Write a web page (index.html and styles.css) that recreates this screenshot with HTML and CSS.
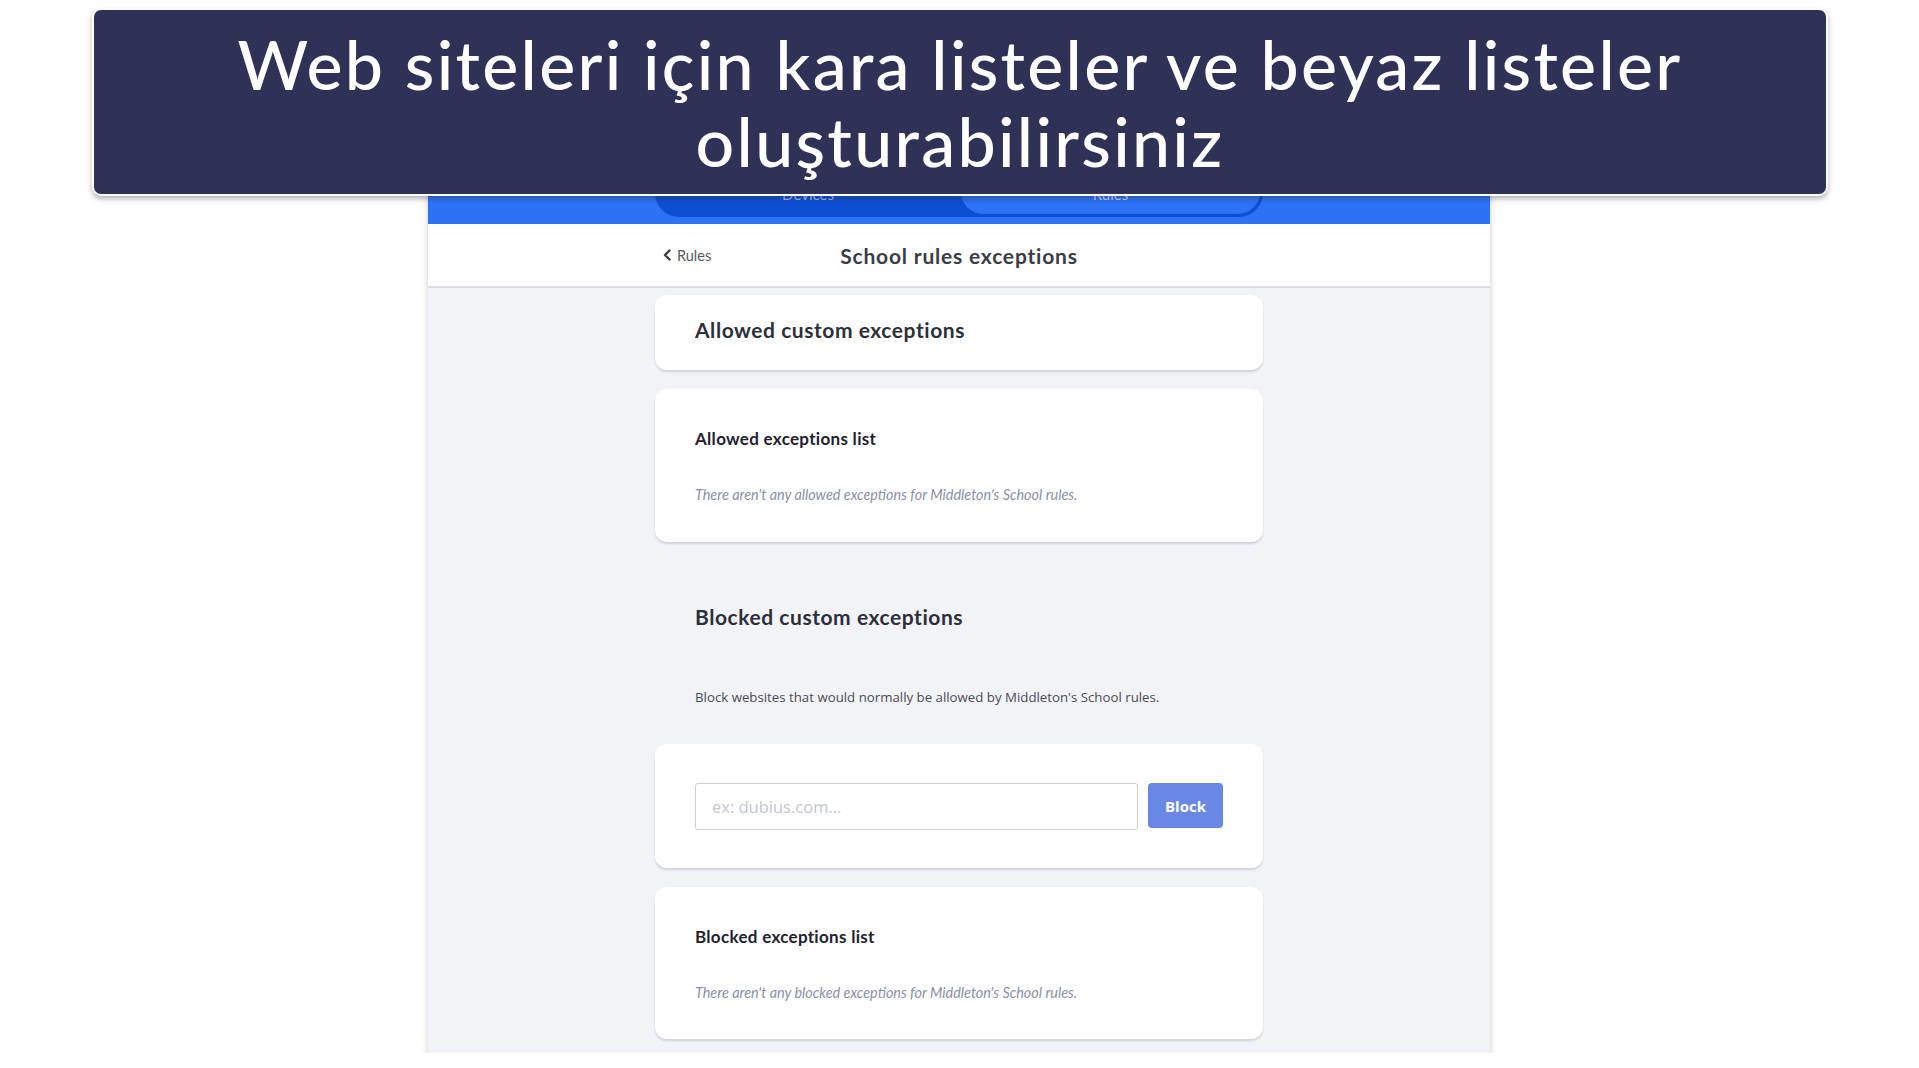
FILE: index.html
```html
<!DOCTYPE html>
<html lang="tr">
  <head>
    <meta charset="UTF-8" />
    <meta name="viewport" content="width=device-width, initial-scale=1.0" />
    <title>School rules exceptions</title>
    <link rel="stylesheet" href="styles.css">
  </head>
  <body>
    <div class="banner">
      <h1>Web siteleri için kara listeler ve beyaz listeler oluşturabilirsiniz</h1>
    </div>

    <div class="frame">
      <header class="topbar">
        <nav class="tabs">
          <a href="#" class="tab">Devices</a>
          <a href="#" class="tab active">Rules</a>
        </nav>
      </header>

      <div class="subbar">
        <div class="subbar-inner">
          <a href="#" class="back">
            <svg width="8" height="12" viewBox="0 0 8 12">
              <path d="M6.5 1.5 L2 6 L6.5 10.5" fill="none" stroke="#3a3c48" stroke-width="2.4" stroke-linecap="round" stroke-linejoin="round" />
            </svg>
            Rules
          </a>
          <h2>School rules exceptions</h2>
          <span></span>
        </div>
      </div>

      <main class="content">
        <section class="card card-head">
          <h3>Allowed custom exceptions</h3>
        </section>

        <section class="card card-list">
          <h4>Allowed exceptions list</h4>
          <p class="empty">There aren't any allowed exceptions for Middleton's School rules.</p>
        </section>

        <section class="plain">
          <h3>Blocked custom exceptions</h3>
          <p class="desc">Block websites that would normally be allowed by Middleton's School rules.</p>
        </section>

        <section class="card card-form">
          <form>
            <input type="text" placeholder="ex: dubius.com..." />
            <button type="submit">Block</button>
          </form>
        </section>

        <section class="card card-list">
          <h4>Blocked exceptions list</h4>
          <p class="empty">There aren't any blocked exceptions for Middleton's School rules.</p>
        </section>
      </main>
    </div>
  </body>
</html>
```

FILE: styles.css
```css
body {
  font-family: Lato, "Noto Sans", sans-serif;
  margin: 0;
  padding: 0;
  background-color: #fff;
  color: #2d2f3a;
}

.banner {
  position: absolute;
  left: 92px;
  top: 8px;
  width: 1732px;
  height: 184px;
  background-color: #2f3156;
  border: 2px solid #fff;
  border-radius: 9px;
  box-shadow: 0 3px 5px rgba(40, 40, 70, 0.35);
  display: flex;
  align-items: center;
  justify-content: center;
  z-index: 2;
}

.banner h1 {
  margin: 0;
  max-width: 1580px;
  color: #fff;
  font-size: 68px;
  font-weight: 500;
  letter-spacing: 2.3px;
  line-height: 77px;
  text-align: center;
}

.frame {
  width: 1062px;
  margin: 150px 0 0 428px;
  background-color: #f2f3f7;
  box-shadow: 0 3px 6px rgba(0, 0, 0, 0.22);
  padding-bottom: 14px;
}

.topbar {
  background-color: #2b72f5;
  height: 74px;
  padding-top: 15px;
  box-sizing: border-box;
}

.tabs {
  width: 608px;
  height: 52px;
  margin: 0 auto;
  display: grid;
  grid-template-columns: 306px 1fr;
  background-color: #0d4fd2;
  border-radius: 0 0 24px 24px;
  padding: 0 3px 3px 0;
  box-sizing: border-box;
}

.tab {
  display: flex;
  align-items: center;
  justify-content: center;
  padding-top: 8px;
  color: #a8bff0;
  font-size: 15px;
  text-decoration: none;
  border-radius: 0 0 22px 22px;
}

.tab.active {
  background-color: #2b72f5;
  color: #c9d8fb;
}

.subbar {
  background-color: #fff;
  height: 62px;
  border-bottom: 2px solid #dcdde3;
}

.subbar-inner {
  width: 608px;
  height: 100%;
  margin: 0 auto;
  display: grid;
  grid-template-columns: 1fr auto 1fr;
  align-items: center;
}

.back {
  display: flex;
  align-items: center;
  gap: 6px;
  padding-left: 8px;
  color: #555866;
  font-size: 14.5px;
  text-decoration: none;
}

.subbar h2 {
  margin: 0;
  font-size: 21px;
  font-weight: 700;
  color: #3a3c46;
  letter-spacing: 0.8px;
}

.content {
  width: 608px;
  margin: 7px auto 0;
  display: flex;
  flex-direction: column;
}

.card {
  background-color: #fff;
  border-radius: 12px;
  box-shadow: 0 2px 2px rgba(60, 60, 90, 0.18);
  padding: 0 40px;
  box-sizing: border-box;
  margin-bottom: 19px;
}

.card-head {
  height: 75px;
  display: flex;
  align-items: center;
  padding-bottom: 6px;
}

h3 {
  margin: 0;
  font-size: 21px;
  font-weight: 700;
  color: #2d2f3a;
  letter-spacing: 0.55px;
}

.card-list {
  height: 153px;
  padding-top: 40px;
}

.card-list h4 {
  margin: 0;
  font-size: 17px;
  font-weight: 700;
  color: #1f2131;
  letter-spacing: 0.3px;
  line-height: 20px;
}

.empty {
  margin: 38px 0 0;
  font-size: 14.4px;
  font-style: italic;
  color: #8b8fa6;
  line-height: 16px;
}

.plain {
  padding: 44px 40px 0;
  margin-bottom: 38px;
}

.plain h3 {
  line-height: 24px;
}

.desc {
  font-family: "Open Sans", sans-serif;
  margin: 59px 0 0;
  font-size: 13.25px;
  color: #4a4b55;
  line-height: 18px;
}

.card-form {
  height: 124px;
  padding-top: 39px;
}

.card-form form {
  display: flex;
  gap: 10px;
}

.card-form input {
  flex: 1;
  height: 47px;
  box-sizing: border-box;
  border: 1px solid #cfd0d6;
  border-radius: 3px;
  padding: 0 16px;
  font-family: "Open Sans", sans-serif;
  font-size: 16.5px;
  color: #333;
}

.card-form input::placeholder {
  color: #c4c6d0;
}

.card-form button {
  width: 75px;
  height: 45px;
  background-color: #6a87e6;
  color: #fff;
  border: none;
  border-radius: 4px;
  font-family: "Open Sans", sans-serif;
  font-weight: 700;
  font-size: 15px;
  cursor: pointer;
}

.card-list:last-child {
  margin-bottom: 0;
  height: 152px;
}
```
